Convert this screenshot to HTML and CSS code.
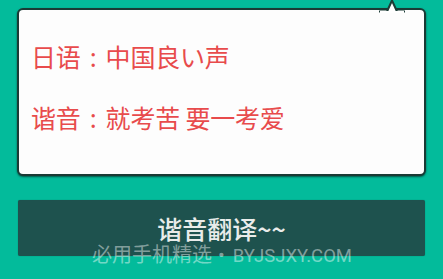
FILE: index.html
```html
<!DOCTYPE html>
<html lang="zh">
<head>
<meta charset="utf-8">
<link rel="stylesheet" href="styles.css">
</head>
<body>
<div class="page">
  <div class="bubble">
    <svg class="tip" width="26" height="14" viewBox="0 0 26 14">
      <path d="M0 12.5 L8 12.5 L13 1.5 L18 12.5 L26 12.5" fill="#ffffff" stroke="#1d3d37" stroke-width="2" stroke-linejoin="round"/>
      <rect x="1" y="12" width="24" height="3" fill="#ffffff"/>
    </svg>
    <p class="line">日语<span class="colon">:</span>中国良い声</p>
    <p class="line">谐音<span class="colon">:</span>就考苦 要一考爱</p>
  </div>
  <div class="button">谐音翻译~~</div>
</div>
<div class="watermark">必用手机精选<span class="dot">•</span><span class="latin">BYJSJXY.COM</span></div>
</body>
</html>
```
FILE: styles.css
```css
html, body {
  margin: 0;
  padding: 0;
}
body {
  width: 443px;
  height: 279px;
  background: #03bb9b;
  font-family: "Noto Sans CJK SC", "Noto Sans", sans-serif;
  position: relative;
  overflow: hidden;
}
.page {
  display: flex;
  flex-direction: column;
  padding: 8px 17px 0 17px;
  gap: 24px;
}
.bubble {
  position: relative;
  height: 148px;
  background: #fdfdfd;
  border: 2px solid #1a3a35;
  border-radius: 6px;
  box-shadow: 0 1px 2px rgba(0, 0, 0, 0.55);
  padding: 16px 12px 0 12px;
  box-sizing: content-box;
}
.tip {
  position: absolute;
  top: -11px;
  right: 19px;
}
.line {
  margin: 0;
  font-size: 25px;
  line-height: 60px;
  color: #e84b4c;
  letter-spacing: -0.2px;
}
.colon {
  display: inline-block;
  width: 25px;
  text-align: center;
  font-family: "Noto Sans", sans-serif;
  font-size: 26px;
}
.button {
  margin: 0 1px;
  height: 56px;
  background: #1e524e;
  border-radius: 2px;
  color: #e9ecea;
  font-size: 25px;
  font-weight: 500;
  display: flex;
  align-items: center;
  justify-content: center;
  box-shadow: 0 0 1px rgba(0, 0, 0, 0.4);
}
.watermark {
  position: absolute;
  left: 92px;
  top: 240px;
  font-family: Roboto, "Noto Sans CJK SC", sans-serif;
  font-size: 20px;
  line-height: 30px;
  color: rgba(255, 255, 255, 0.45);
  white-space: nowrap;
}
.dot {
  margin: 0 8px 0 6px;
}
.latin {
  font-size: 18.5px;
}
```
